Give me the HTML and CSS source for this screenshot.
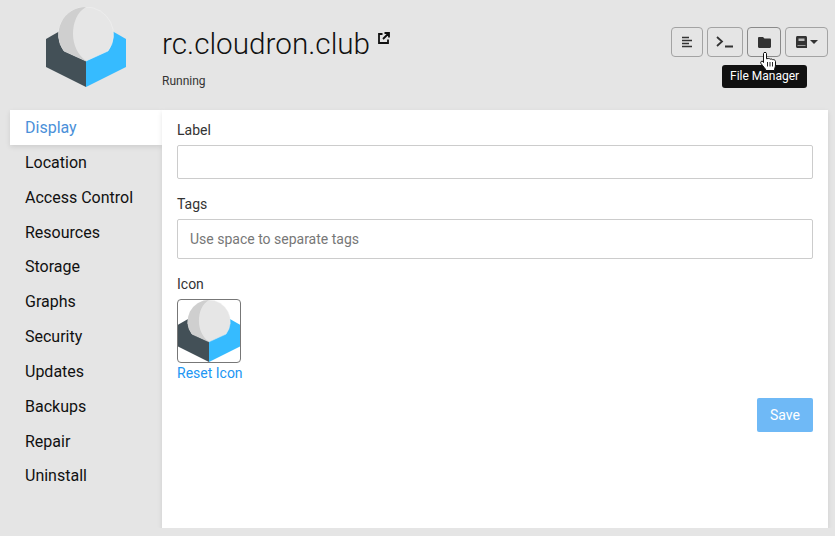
FILE: index.html
```html
<!DOCTYPE html>
<html lang="en">
<head>
    <meta charset="UTF-8">
    <title>rc.cloudron.club</title>
    <link rel="stylesheet" href="styles.css">
</head>
<body>
    <svg class="defs" width="0" height="0">
        <symbol id="logo" viewBox="0 0 80 80">
            <polygon points="0,32 40,9 40,80 0,60" fill="#435057"/>
            <polygon points="80,32 40,9 40,80 80,60" fill="#36bbff"/>
            <path d="M40 0A27.500 27.500 0 0 1 62 44L40 54L18 44A27.500 27.500 0 0 1 40 0Z" fill="#e6e6e6" stroke="#f1f1f1" stroke-width=".6"/>
            <path d="M40 0A27.500 27.500 0 0 0 18 44L40 54C32 48 27 38 27 27C27 16 31 5 40 0Z" fill="#cfcfcf"/>
        </symbol>
    </svg>

    <div class="page">
        <header class="app-header">
            <svg class="app-logo"><use href="#logo"/></svg>
            <div class="app-title">
                <h1>rc.cloudron.club<svg class="ext-link" viewBox="0 0 12 12"><path d="M4.500 2H1V11H10V7.500M6.500 1H11V5.500M11 1L5 7" fill="none" stroke="#111" stroke-width="1.800"/></svg></h1>
                <div class="app-status">Running</div>
            </div>
            <div class="toolbar">
                <button class="tool-btn btn-logs">
                    <svg width="12" height="12" viewBox="0 0 12 12"><path d="M1 1.500H8M1 4.500H11M1 7.500H8M1 10.500H11" stroke="#333" stroke-width="1.400"/></svg>
                </button>
                <button class="tool-btn btn-term">
                    <svg width="18" height="12" viewBox="0 0 18 12"><path d="M1 1L6 5.500L1 10M9 10.500H17" fill="none" stroke="#333" stroke-width="1.800"/></svg>
                </button>
                <button class="tool-btn btn-files">
                    <svg width="13" height="11" viewBox="0 0 13 11"><path d="M0 1.200C0 .5.500 0 1.200 0H5L6.500 1.500H11.800C12.500 1.500 13 2 13 2.700V9.800C13 10.500 12.500 11 11.800 11H1.200C.5 11 0 10.500 0 9.800Z" fill="#333"/></svg>
                </button>
                <button class="tool-btn btn-docs">
                    <svg width="11" height="12" viewBox="0 0 11 12"><path d="M1.500 0H9.500C10.400 0 11 .6 11 1.500V12H1.500C.6 12 0 11.400 0 10.500V1.500C0 .6.600 0 1.500 0Z" fill="#333"/><path d="M2.500 2.500H8.500V5H2.500Z" fill="#bbb"/><path d="M1.500 9H9.500V10H1.500Z" fill="#999"/></svg>
                    <span class="caret"></span>
                </button>
                <div class="tooltip">File Manager</div>
                <svg class="cursor" viewBox="0 0 17 19">
                    <path d="M3.500 1.500C3.500 0 6.500 0 6.500 1.500V6.800L8 6.500C9 6.300 10 6.800 10.200 7.200C11 6.800 12.200 7 12.500 7.700C13.500 7.300 15.500 8 15.500 9.500V13C15.500 15 14.500 16 14.500 18.500H6C5.500 16.500 3.500 15 1 11.500C0 10 1.500 8.500 3 9.500L3.500 10.500Z" fill="#fff" stroke="#111"/>
                    <path d="M7.500 10V14.500M10 10V14.500M12.500 10V14.500" stroke="#111" stroke-width=".9"/>
                </svg>
            </div>
        </header>

        <div class="main">
            <ul class="side-nav">
                <li class="active">Display</li>
                <li>Location</li>
                <li>Access Control</li>
                <li>Resources</li>
                <li>Storage</li>
                <li>Graphs</li>
                <li>Security</li>
                <li>Updates</li>
                <li>Backups</li>
                <li>Repair</li>
                <li>Uninstall</li>
            </ul>
            <form class="panel">
                <div class="form-group">
                    <label>Label</label>
                    <input class="form-control" type="text">
                </div>
                <div class="form-group">
                    <label>Tags</label>
                    <input class="form-control tall" type="text" placeholder="Use space to separate tags">
                </div>
                <div class="form-group">
                    <label>Icon</label>
                    <div class="icon-box"><svg><use href="#logo"/></svg></div>
                    <a class="reset-link">Reset Icon</a>
                </div>
                <div class="form-actions">
                    <button type="button" class="btn-save">Save</button>
                </div>
            </form>
        </div>
    </div>
</body>
</html>
```

FILE: styles.css
```css
* {
    box-sizing: border-box;
}

body {
    font-family: Roboto, 'Liberation Sans', sans-serif;
    font-size: 14px;
    line-height: 1.42857;
    margin: 0;
    background-color: #e5e5e5;
    color: #333;
    overflow: hidden;
}

.defs {
    display: block;
}

.page {
    padding: 0 7px 0 10px;
}

.app-header {
    display: flex;
    height: 110px;
    padding-left: 36px;
    padding-top: 7px;
}

.app-logo {
    width: 80px;
    height: 80px;
    flex-shrink: 0;
}

.app-title {
    flex: 1;
    margin-left: 36px;
}

h1 {
    margin: 0;
    padding-top: 16px;
    font-size: 29.700px;
    font-weight: 300;
    line-height: 42px;
    color: #111;
    white-space: nowrap;
}

.ext-link {
    width: 12px;
    height: 12px;
    vertical-align: 10px;
    margin-left: 8px;
}

.app-status {
    margin-top: 8px;
    font-size: 12px;
    line-height: 17px;
}

.toolbar {
    display: flex;
    gap: 4px;
    position: relative;
    height: 30px;
    margin-top: 20px;
}

.tool-btn {
    display: flex;
    align-items: center;
    justify-content: center;
    height: 30px;
    padding: 0;
    border: 1px solid #a3a3a3;
    border-radius: 4px;
    background-color: #e5e5e5;
}

.btn-logs {
    width: 32px;
}

.btn-term {
    width: 36px;
}

.btn-files {
    width: 34px;
    border-color: #8a8a8a;
}

.btn-docs {
    width: 43px;
    gap: 3px;
}

.caret {
    border-top: 4px solid #333;
    border-left: 4px solid transparent;
    border-right: 4px solid transparent;
}

.tooltip {
    position: absolute;
    top: 38px;
    left: 51px;
    padding: 3px 8px;
    font-size: 12px;
    line-height: 17px;
    color: #fff;
    background-color: #111;
    border-radius: 3px;
    white-space: nowrap;
}

.cursor {
    position: absolute;
    top: 25px;
    left: 89px;
    width: 17px;
    height: 19px;
}

.main {
    display: flex;
}

.side-nav {
    width: 152px;
    margin: 0;
    padding: 0;
    list-style: none;
    flex-shrink: 0;
}

.side-nav li {
    padding: 7px 15px 5px;
    font-size: 16px;
    color: #111;
}

.side-nav li.active {
    color: #4a90d9;
    background-color: #fff;
    box-shadow: 0 2px 5px rgba(0, 0, 0, 0.1);
}

.panel {
    flex: 1;
    height: 418px;
    padding: 10px 15px;
    background-color: #fff;
    box-shadow: 0 2px 5px rgba(0, 0, 0, 0.1);
    position: relative;
}

.form-group {
    margin-bottom: 15px;
}

label {
    display: block;
    margin-bottom: 5px;
    font-weight: 400;
    line-height: 20px;
}

.form-control {
    display: block;
    width: 100%;
    height: 34px;
    padding: 6px 12px;
    font-family: inherit;
    font-size: 14px;
    color: #333;
    border: 1px solid #ccc;
    border-radius: 2px;
    outline: none;
}

.form-control.tall {
    height: 40px;
}

.form-control::placeholder {
    color: #777;
}

.icon-box {
    width: 64px;
    height: 64px;
    border: 1px solid #777;
    border-radius: 4px;
    overflow: hidden;
}

.icon-box svg {
    display: block;
    width: 62px;
    height: 62px;
}

.reset-link {
    display: block;
    color: #2196f3;
    line-height: 20px;
}

.form-actions {
    display: flex;
    justify-content: flex-end;
}

.btn-save {
    height: 34px;
    width: 56px;
    padding: 0;
    font-family: inherit;
    font-size: 14px;
    color: #fff;
    background-color: #6fb9f6;
    border: none;
    border-radius: 2px;
}
```
